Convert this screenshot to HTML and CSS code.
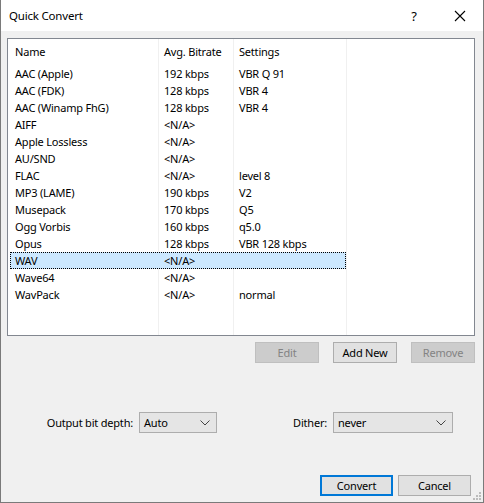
FILE: index.html
```html
<!DOCTYPE html>
<html lang="en">
<head>
    <meta charset="UTF-8">
    <title>Quick Convert</title>
    <link rel="stylesheet" href="styles.css">
</head>
<body>
    <div class="window">
        <div class="titlebar">
            <span class="title">Quick Convert</span>
            <span class="help">?</span>
            <span class="close">
                <svg width="12" height="12" viewBox="0 0 12 12"><path d="M1 1L11 11M11 1L1 11" stroke="#000" stroke-width="1.1" fill="none"/></svg>
            </span>
        </div>

        <div class="content">
            <div class="list">
                <div class="row header">
                    <span>Name</span><span>Avg. Bitrate</span><span>Settings</span>
                </div>
                <div class="row"><span>AAC (Apple)</span><span>192 kbps</span><span>VBR Q 91</span></div>
                <div class="row"><span>AAC (FDK)</span><span>128 kbps</span><span>VBR 4</span></div>
                <div class="row"><span>AAC (Winamp FhG)</span><span>128 kbps</span><span>VBR 4</span></div>
                <div class="row"><span>AIFF</span><span>&lt;N/A&gt;</span><span></span></div>
                <div class="row"><span>Apple Lossless</span><span>&lt;N/A&gt;</span><span></span></div>
                <div class="row"><span>AU/SND</span><span>&lt;N/A&gt;</span><span></span></div>
                <div class="row"><span>FLAC</span><span>&lt;N/A&gt;</span><span>level 8</span></div>
                <div class="row"><span>MP3 (LAME)</span><span>190 kbps</span><span>V2</span></div>
                <div class="row"><span>Musepack</span><span>170 kbps</span><span>Q5</span></div>
                <div class="row"><span>Ogg Vorbis</span><span>160 kbps</span><span>q5.0</span></div>
                <div class="row"><span>Opus</span><span>128 kbps</span><span>VBR 128 kbps</span></div>
                <div class="row selected"><span>WAV</span><span>&lt;N/A&gt;</span><span></span></div>
                <div class="row"><span>Wave64</span><span>&lt;N/A&gt;</span><span></span></div>
                <div class="row"><span>WavPack</span><span>&lt;N/A&gt;</span><span>normal</span></div>
            </div>

            <div class="list-buttons">
                <button class="btn" disabled>Edit</button>
                <button class="btn">Add New</button>
                <button class="btn" disabled>Remove</button>
            </div>

            <div class="options">
                <label class="opt-label depth-label">Output bit depth:</label>
                <div class="combo combo-depth"><span>Auto</span><svg width="10" height="6" viewBox="0 0 10 6"><path d="M0.5 0.5L5 5L9.5 0.5" stroke="#444" fill="none"/></svg></div>
                <label class="opt-label dither-label">Dither:</label>
                <div class="combo combo-dither"><span>never</span><svg width="10" height="6" viewBox="0 0 10 6"><path d="M0.5 0.5L5 5L9.5 0.5" stroke="#444" fill="none"/></svg></div>
            </div>

            <div class="dialog-buttons">
                <button class="btn btn-wide default">Convert</button>
                <button class="btn btn-wide">Cancel</button>
            </div>

            <div class="grip">
                <i style="right:1px;bottom:1px"></i><i style="right:4px;bottom:1px"></i><i style="right:7px;bottom:1px"></i>
                <i style="right:1px;bottom:4px"></i><i style="right:4px;bottom:4px"></i>
                <i style="right:1px;bottom:7px"></i>
            </div>
        </div>
    </div>
</body>
</html>
```

FILE: styles.css
```css
body {
    margin: 0;
    font-family: "Noto Sans", sans-serif;
    font-size: 11px;
    letter-spacing: -0.2px;
    color: #000;
    background: #fff;
}

.window {
    width: 484px;
    height: 503px;
    box-sizing: border-box;
    border: 1px solid #7a7a7a;
    border-top: none;
    background: #f0f0f0;
    display: flex;
    flex-direction: column;
}

.titlebar {
    height: 31px;
    background: #fff;
    display: flex;
    align-items: center;
    padding-left: 8px;
    flex-shrink: 0;
}

.title {
    flex: 1;
    font-size: 11.5px;
}

.help {
    width: 24px;
    text-align: center;
    font-size: 13px;
    margin-right: 22px;
}

.close {
    width: 24px;
    display: flex;
    justify-content: center;
    margin-right: 11px;
}

.content {
    flex: 1;
    position: relative;
    padding: 7px 0 0 6px;
}

/* список форматів */
.list {
    width: 468px;
    height: 298px;
    box-sizing: border-box;
    border: 1px solid #828790;
    background-color: #fff;
    background-image:
        linear-gradient(#f0f0f0, #f0f0f0),
        linear-gradient(#f0f0f0, #f0f0f0),
        linear-gradient(#f0f0f0, #f0f0f0);
    background-size: 1px 100%;
    background-repeat: no-repeat;
    background-position: 150px 0, 225px 0, 338px 0;
}

.row {
    display: grid;
    grid-template-columns: 148px 75px 113px;
    height: 17px;
    line-height: 17px;
    margin-left: 2px;
    width: 336px;
    box-sizing: border-box;
    white-space: nowrap;
}

.row span {
    padding-left: 6px;
}

.row span:first-child {
    padding-left: 5px;
}

.row.header {
    height: 26px;
    line-height: 26px;
}

.row.selected {
    background: #cce8ff;
    outline: 1px dotted #000;
    outline-offset: -1px;
}

.list-buttons {
    display: flex;
    gap: 14px;
    justify-content: flex-end;
    width: 468px;
    margin-top: 6px;
}

.btn {
    font-family: inherit;
    font-size: 11px;
    letter-spacing: -0.2px;
    width: 64px;
    height: 21px;
    padding: 0;
    background: #e1e1e1;
    border: 1px solid #adadad;
    color: #000;
}

.btn:disabled {
    background: #cccccc;
    border-color: #bfbfbf;
    color: #838383;
}

.options {
    display: flex;
    align-items: center;
    margin-top: 49px;
}

.opt-label {
    text-align: right;
    padding-right: 6px;
    box-sizing: border-box;
}

.depth-label {
    width: 132px;
}

.dither-label {
    width: 116px;
}

.combo {
    height: 21px;
    box-sizing: border-box;
    border: 1px solid #adadad;
    background: #e5e5e5;
    display: flex;
    align-items: center;
    justify-content: space-between;
    padding: 0 6px 0 4px;
}

.combo-depth {
    width: 78px;
}

.combo-dither {
    width: 120px;
}

.dialog-buttons {
    display: flex;
    gap: 5px;
    justify-content: flex-end;
    margin-top: 42px;
    padding-right: 12px;
}

.btn-wide {
    width: 73px;
}

.btn.default {
    border: 2px solid #0078d7;
}

.grip {
    position: absolute;
    right: 1px;
    bottom: 1px;
    width: 10px;
    height: 10px;
}

.grip i {
    position: absolute;
    width: 2px;
    height: 2px;
    background: #bcbcbc;
}
```
